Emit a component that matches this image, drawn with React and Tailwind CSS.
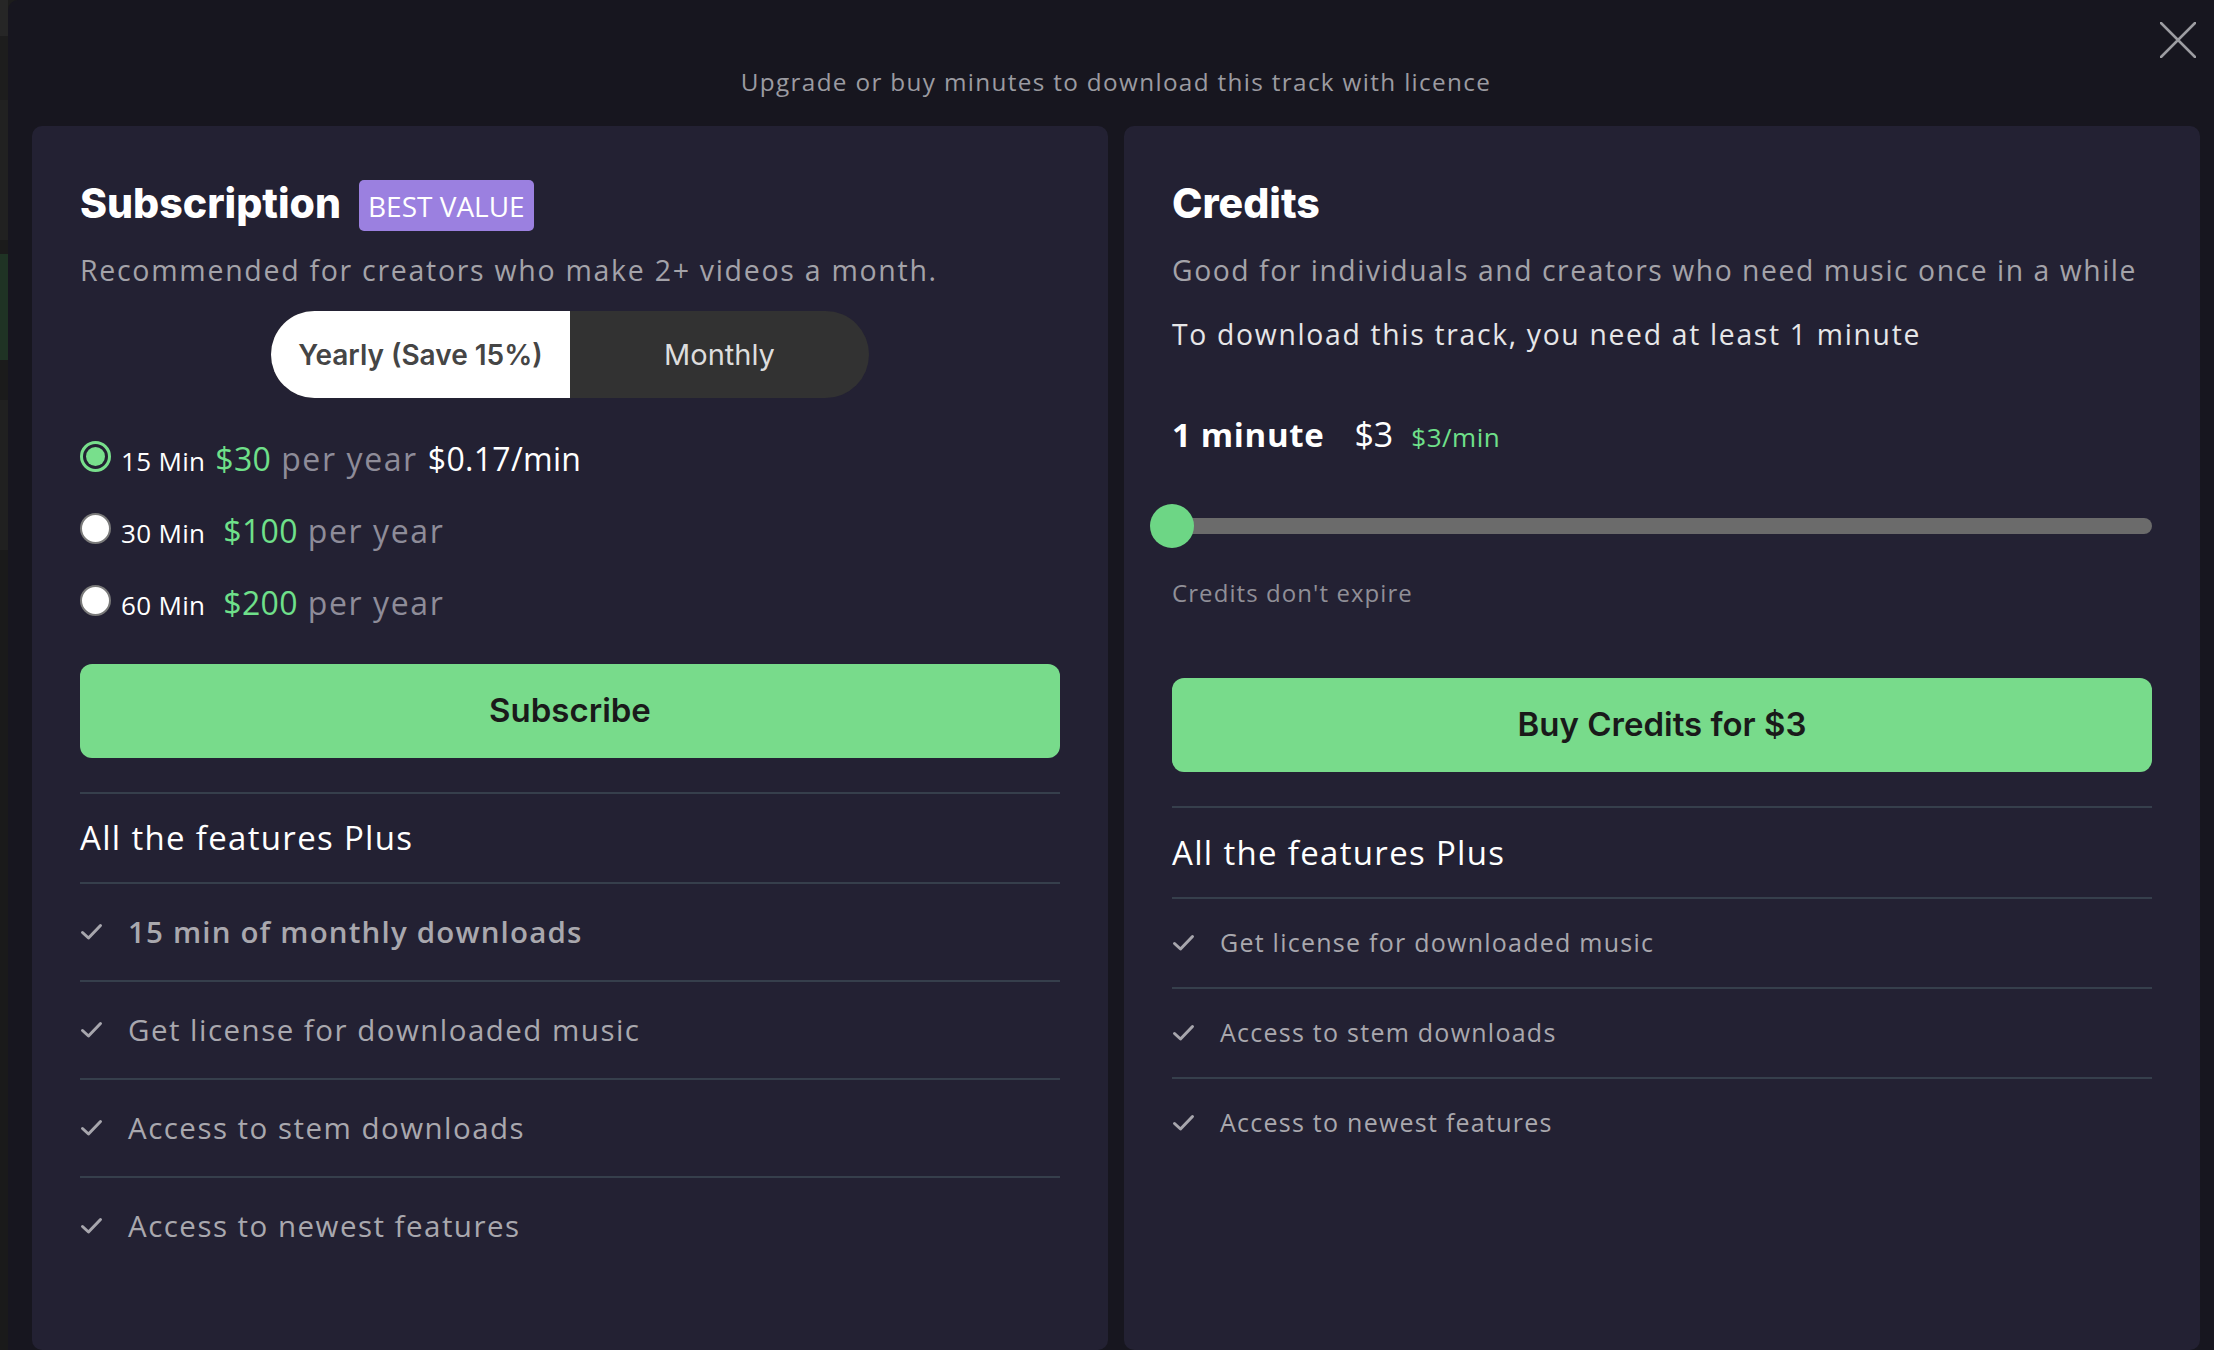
import React from 'react';

const Check = () => (
  <svg width="23" height="18" viewBox="0 0 23 18" fill="none" className="shrink-0">
    <polyline points="2.5,9.5 8.5,15 20.5,2.5" stroke="#a7a6ad" strokeWidth="3" strokeLinecap="round" strokeLinejoin="round" />
  </svg>
);

const CloseIcon = () => (
  <svg width="36" height="36" viewBox="0 0 36 36" fill="none">
    <path d="M1 1L35 35M35 1L1 35" stroke="#9d9da2" strokeWidth="2.5" strokeLinecap="round" />
  </svg>
);

function Radio({ checked }) {
  if (checked) {
    return (
      <span className="w-[31px] h-[31px] rounded-full border-[3px] border-[#78df8c] p-[3px] -mt-[6px] shrink-0">
        <span className="block w-full h-full rounded-full bg-[#78df8c]" />
      </span>
    );
  }
  return <span className="w-[31px] h-[31px] rounded-full bg-white border-[2px] border-[#7a7a7a] -mt-[6px] shrink-0" />;
}

const subFeatures = [
  { text: '15 min of monthly downloads', bold: true },
  { text: 'Get license for downloaded music' },
  { text: 'Access to stem downloads' },
  { text: 'Access to newest features' },
];

const creditFeatures = ['Get license for downloaded music', 'Access to stem downloads', 'Access to newest features'];

export default function App() {
  return (
    <div className="w-full h-[1350px] flex overflow-hidden bg-[#1c1c1c] font-['Open_Sans',sans-serif]">
      {/* page behind the modal */}
      <div className="w-[8px] shrink-0 flex flex-col">
        <div className="h-[36px] bg-[#262626]" />
        <div className="h-[64px] bg-[#1d1d1d]" />
        <div className="h-[140px] bg-[#212121]" />
        <div className="h-[14px] bg-[#1b1b1b]" />
        <div className="h-[106px] bg-[#1f3324]" />
        <div className="h-[40px] bg-[#1b1b1b]" />
        <div className="h-[150px] bg-[#202020]" />
        <div className="flex-1 bg-[#1a1a1a]" />
      </div>

      {/* modal */}
      <div className="relative flex-1 flex flex-col bg-[#17161f] rounded-tl-[10px] pl-[24px] pr-[14px]">
        <button className="absolute top-[22px] right-[18px]">
          <CloseIcon />
        </button>

        <div className="h-[126px] pt-[38px] flex items-center justify-center">
          <p className="text-[24.3px] tracking-[0.055em] text-[#9b9ba1]">Upgrade or buy minutes to download this track with licence</p>
        </div>

        <div className="flex-1 grid grid-cols-2 gap-[16px]">
          {/* Subscription */}
          <div className="bg-[#232133] rounded-[10px] px-[48px] pt-[54px] flex flex-col">
            <div className="flex items-center h-[51px] gap-[18px]">
              <h2 className="mb-[5px] font-['Inter',sans-serif] font-extrabold text-[41px] leading-none text-white">Subscription</h2>
              <span className="h-[51px] px-[9px] flex items-center rounded-[5px] bg-[#9b80e0] text-white text-[28px]">BEST VALUE</span>
            </div>
            <p className="mt-[20px] text-[28.5px] leading-[39px] tracking-[0.06em] text-[#a4a3a9]">
              Recommended for creators who make 2+ videos a month.
            </p>

            <div className="mt-[21px] mx-auto w-[598px] h-[87px] rounded-full bg-[#323232] flex overflow-hidden font-['Inter',sans-serif]">
              <div className="w-1/2 bg-white flex items-center justify-center text-[28px] font-semibold text-[#454545]">Yearly (Save 15%)</div>
              <div className="w-1/2 flex items-center justify-center text-[29px] text-[#dddddd]">Monthly</div>
            </div>

            <div className="mt-[25px] flex flex-col">
              <div className="h-[72px] flex items-center">
                <Radio checked />
                <div className="ml-[10px] flex items-baseline gap-[10px] tracking-[0.02em]">
                  <span className="text-[26px] text-white">15 Min</span>
                  <span className="text-[32px] text-[#6fe08a]">$30</span>
                  <span className="text-[32px] tracking-[0.05em] text-[#8e8c99]">per year</span>
                  <span className="text-[32px] text-white">$0.17/min</span>
                </div>
              </div>
              <div className="h-[72px] flex items-center">
                <Radio />
                <div className="ml-[10px] flex items-baseline gap-[10px] tracking-[0.02em]">
                  <span className="text-[26px] text-white">30 Min</span>
                  <span className="ml-[8px] text-[32px] text-[#6fe08a]">$100</span>
                  <span className="text-[32px] tracking-[0.05em] text-[#8e8c99]">per year</span>
                </div>
              </div>
              <div className="h-[72px] flex items-center">
                <Radio />
                <div className="ml-[10px] flex items-baseline gap-[10px] tracking-[0.02em]">
                  <span className="text-[26px] text-white">60 Min</span>
                  <span className="ml-[8px] text-[32px] text-[#6fe08a]">$200</span>
                  <span className="text-[32px] tracking-[0.05em] text-[#8e8c99]">per year</span>
                </div>
              </div>
            </div>

            <button className="mt-[25px] h-[94px] w-full rounded-[12px] bg-[#78db8b] font-['Inter',sans-serif] font-semibold text-[33px] text-[#1a1a1a]">
              Subscribe
            </button>

            <div className="mt-[34px] border-t-2 border-[#363f4c] h-[90px] flex items-center text-[33px] tracking-[0.04em] text-white">
              All the features Plus
            </div>
            {subFeatures.map((f) => (
              <div key={f.text} className="border-t-2 border-[#363f4c] h-[98px] flex items-center gap-[25px]">
                <Check />
                <span className={f.bold ? 'text-[29.5px] font-semibold tracking-[0.04em] text-[#a9a8ae]' : 'text-[29.5px] tracking-[0.05em] text-[#a9a8ae]'}>
                  {f.text}
                </span>
              </div>
            ))}
          </div>

          {/* Credits */}
          <div className="bg-[#232133] rounded-[10px] px-[48px] pt-[54px] flex flex-col">
            <div className="flex items-center h-[51px]">
              <h2 className="mb-[5px] font-['Inter',sans-serif] font-extrabold text-[41px] leading-none text-white">Credits</h2>
            </div>
            <p className="mt-[20px] text-[28.3px] leading-[39px] tracking-[0.055em] text-[#a4a3a9]">
              Good for individuals and creators who need music once in a while
            </p>
            <p className="mt-[25px] text-[28.3px] leading-[39px] tracking-[0.06em] text-[#e6e6e8]">
              To download this track, you need at least 1 minute
            </p>

            <div className="mt-[55px] h-[50px] flex items-baseline">
              <span className="font-bold text-[33px] leading-[50px] tracking-[0.02em] text-white">1 minute</span>
              <span className="ml-[30px] text-[34px] text-white">$3</span>
              <span className="ml-[18px] text-[26px] tracking-[0.02em] text-[#6fe08a]">$3/min</span>
            </div>

            <div className="mt-[45px] h-[44px] relative flex items-center">
              <div className="w-full h-[16px] rounded-full bg-[#6b6b6b]" />
              <div className="absolute -left-[22px] top-0 w-[44px] h-[44px] rounded-full bg-[#6dd685]" />
            </div>

            <p className="mt-[29px] text-[24px] leading-[32px] tracking-[0.045em] text-[#908f97]">Credits don't expire</p>

            <button className="mt-[69px] h-[94px] w-full rounded-[12px] bg-[#78db8b] font-['Inter',sans-serif] font-semibold text-[33px] text-[#1a1a1a]">
              Buy Credits for $3
            </button>

            <div className="mt-[34px] border-t-2 border-[#363f4c] h-[91px] flex items-center text-[33px] tracking-[0.04em] text-white">
              All the features Plus
            </div>
            {creditFeatures.map((t) => (
              <div key={t} className="border-t-2 border-[#363f4c] h-[90px] flex items-center gap-[25px]">
                <Check />
                <span className="text-[25px] tracking-[0.05em] text-[#a9a8ae]">{t}</span>
              </div>
            ))}
          </div>
        </div>
      </div>
    </div>
  );
}
